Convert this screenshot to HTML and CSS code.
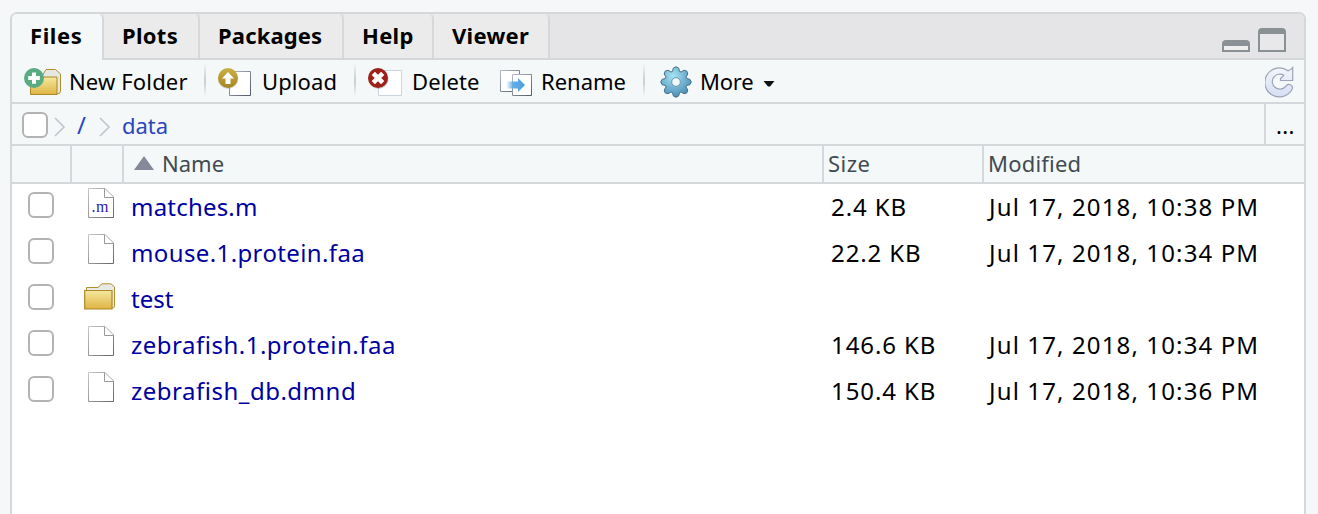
FILE: index.html
```html
<!DOCTYPE html>
<html lang="en">
<head>
<meta charset="utf-8">
<title>Files</title>
<link rel="stylesheet" href="styles.css">
</head>
<body>
<svg class="defs" width="0" height="0">
  <defs>
    <linearGradient id="gold" x1="0" y1="0" x2="0" y2="1"><stop offset="0" stop-color="#f4e9a0"/><stop offset="1" stop-color="#dfb442"/></linearGradient>
    <linearGradient id="edge" x1="0" y1="0" x2="1" y2="1"><stop offset="0" stop-color="#c8c8c8"/><stop offset="1" stop-color="#686868"/></linearGradient>
    <linearGradient id="slate" x1="0" y1="0" x2="1" y2="1"><stop offset="0" stop-color="#b8bdc4"/><stop offset="1" stop-color="#50596a"/></linearGradient>
    <linearGradient id="olive" x1="0" y1="0" x2="0" y2="1"><stop offset="0" stop-color="#cdb045"/><stop offset="1" stop-color="#a58520"/></linearGradient>
    <linearGradient id="arrow" x1="0" y1="0" x2="1" y2="0"><stop offset="0" stop-color="#62aeea" stop-opacity="0.1"/><stop offset="0.35" stop-color="#62aeea"/><stop offset="1" stop-color="#4d9ce2"/></linearGradient>
    <radialGradient id="steel" cx="0.4" cy="0.3" r="0.7"><stop offset="0" stop-color="#a5e3f2"/><stop offset="1" stop-color="#4b8fb9"/></radialGradient>
    <linearGradient id="ice" x1="0" y1="0" x2="0" y2="1"><stop offset="0" stop-color="#f3f6fb"/><stop offset="1" stop-color="#d5def5"/></linearGradient>
    <symbol id="page" viewBox="0 0 26 30">
      <path d="M.5.5H17L25.500 9V29.500H.5Z" fill="#fff" stroke="url(#edge)"/>
      <path d="M16.500 1V9.500H25.500" fill="#fff" stroke="#999"/>
    </symbol>
    <symbol id="folder" viewBox="0 0 32 27">
      <path d="M2.500 8V4.500H14L18 .8H27L30.500 4V23.500Q30.500 25 28 25" fill="#e9e9e7" stroke="#b0902c"/>
      <path d="M.7 7.500H28V26H.7Z" fill="url(#gold)" stroke="#ad8827" stroke-width="1.2"/>
    </symbol>
  </defs>
</svg>

<main class="panel">
  <header class="tabs">
    <div class="tab active t-files">Files</div>
    <div class="tab t-plots">Plots</div>
    <div class="tab t-packages">Packages</div>
    <div class="tab t-help">Help</div>
    <div class="tab t-viewer">Viewer</div>
    <div class="window-controls">
      <svg width="28" height="12" viewBox="0 0 28 12"><path d="M0 12V4Q0 0 4 0H24Q28 0 28 4V12Z" fill="#8a9194"/><path d="M2 6H26V10H2Z" fill="#eee"/></svg>
      <svg width="28" height="24" viewBox="0 0 28 24"><path d="M0 24V4Q0 0 4 0H24Q28 0 28 4V24Z" fill="#8a9194"/><path d="M2 6H26V22H2Z" fill="#e8e8ea"/></svg>
    </div>
  </header>

  <div class="toolbar">
    <div class="tool new-folder">
      <svg width="38" height="30" viewBox="0 0 38 30">
        <path d="M18 8L22 1.500H31.500L36.500 6V23Q36.500 26 33 26" fill="#e6e6e4" stroke="#b0902c"/>
        <path d="M6.500 9H33V26.500H6.500Z" fill="url(#gold)" stroke="#ad8827"/>
        <circle cx="10" cy="10" r="10" fill="#59ab82"/>
        <path d="M8 4.500H12V8H15.800V12H12V15.700H8V12H4.200V8H8Z" fill="#fff"/>
      </svg>
      <span>New Folder</span>
    </div>
    <i class="sep"></i>
    <div class="tool upload">
      <svg width="34" height="30" viewBox="0 0 34 30">
        <path d="M11.500 3.500H32.500V27.500H11.500Z" fill="#fff" stroke="url(#slate)"/>
        <circle cx="10" cy="11" r="10" fill="#777" opacity=".25"/>
        <circle cx="10" cy="10" r="10" fill="url(#olive)"/>
        <path d="M10 4L16 10.500H12.500V16H7.500V10.500H4Z" fill="#fff"/>
      </svg>
      <span>Upload</span>
    </div>
    <i class="sep"></i>
    <div class="tool delete">
      <svg width="34" height="30" viewBox="0 0 34 30">
        <path d="M10.500 2.500H33.500V27.500H10.500Z" fill="#fff" stroke="#ccd4df"/>
        <circle cx="10.500" cy="11" r="10" fill="#555" opacity=".3"/>
        <circle cx="10" cy="10" r="10" fill="#9b2119"/>
        <path d="M5.300 5.300L14.700 14.700M14.700 5.300L5.300 14.700" stroke="#fff" stroke-width="4.600"/>
      </svg>
      <span>Delete</span>
    </div>
    <div class="tool rename">
      <svg width="32" height="26" viewBox="0 0 32 26">
        <path d="M.5.500H19.500V21.500H.5Z" fill="#fff" stroke="url(#slate)"/>
        <path d="M12.500 4.500H31.500V25.500H12.500Z" fill="#fff" stroke="url(#slate)"/>
        <path d="M7 11.500H18V8L25 15L18 22V18.500H7Z" fill="url(#arrow)"/>
      </svg>
      <span>Rename</span>
    </div>
    <i class="sep"></i>
    <div class="tool more">
      <svg width="32" height="32" viewBox="-16 -16 32 32">
        <g fill="url(#steel)" stroke="#45708a" stroke-width="1">
          <path d="M-3.600 -10.500L-2.600 -14Q0 -16.500 2.600 -14L3.600 -10.500L5 -10L8 -11.800Q11.800 -11.800 11.800 -8L10 -5L10.500 -3.600L14 -2.600Q16.500 0 14 2.600L10.500 3.600L10 5L11.800 8Q11.800 11.800 8 11.800L5 10L3.600 10.500L2.600 14Q0 16.500 -2.600 14L-3.600 10.500L-5 10L-8 11.800Q-11.800 11.800 -11.800 8L-10 5L-10.500 3.600L-14 2.600Q-16.500 0 -14 -2.600L-10.500 -3.600L-10 -5L-11.800 -8Q-11.800 -11.800 -8 -11.800L-5 -10Z"/>
          <circle r="4.300" fill="#f3f7f9" stroke="#6c9aae"/>
        </g>
      </svg>
      <span>More</span>
      <svg class="caret" width="12" height="6" viewBox="0 0 12 6"><path d="M.5 0H11.500L7 5.500H5Z" fill="#111"/></svg>
    </div>
    <svg class="refresh" width="30" height="32" viewBox="0 0 30 32">
      <path d="M23 4.800Q25.500 4.500 27.700 1.500V14.500H15.500V12.500L18.800 9.300A7.500 7.500 0 1 0 20.500 20.500Q22.500 17.500 25.500 18.800Q28.500 20.500 27 23.500A14.500 14.500 0 1 1 23 4.800Z" fill="url(#ice)" stroke="#9ea3b5" stroke-width="1.200"/>
    </svg>
  </div>

  <nav class="path">
    <div class="crumbs">
      <span class="check"></span>
      <svg class="chev" width="12" height="20" viewBox="0 0 12 20"><path d="M1 1L10 10L1 19" fill="none" stroke="#c2c6ce" stroke-width="1.700"/></svg>
      <span class="root">/</span>
      <svg class="chev" width="12" height="20" viewBox="0 0 12 20"><path d="M1 1L10 10L1 19" fill="none" stroke="#c2c6ce" stroke-width="1.700"/></svg>
      <span class="dir">data</span>
    </div>
    <div class="browse">...</div>
  </nav>

  <div class="row head">
    <div></div>
    <div></div>
    <div class="name"><svg width="20" height="14" viewBox="0 0 20 14"><path d="M0 14L10 0L20 14Z" fill="#848899"/></svg><span class="h-name">Name</span></div>
    <div class="size"><span class="h-size">Size</span></div>
    <div class="date"><span class="h-mod">Modified</span></div>
  </div>

  <div class="row">
    <div class="pick"><span class="check"></span></div>
    <div class="icon"><svg width="26" height="30"><use href="#page"/><text x="3.500" y="23.500" class="ext" textLength="17">.m</text></svg></div>
    <div class="name"><span class="f1">matches.m</span></div>
    <div class="size"><span>2.4 KB</span></div>
    <div class="date"><span>Jul 17, 2018, 10:38 PM</span></div>
  </div>
  <div class="row">
    <div class="pick"><span class="check"></span></div>
    <div class="icon"><svg width="26" height="30"><use href="#page"/></svg></div>
    <div class="name"><span class="f2">mouse.1.protein.faa</span></div>
    <div class="size"><span>22.2 KB</span></div>
    <div class="date"><span>Jul 17, 2018, 10:34 PM</span></div>
  </div>
  <div class="row">
    <div class="pick"><span class="check"></span></div>
    <div class="icon dir-icon"><svg width="32" height="27"><use href="#folder"/></svg></div>
    <div class="name"><span class="f3">test</span></div>
    <div class="size"></div>
    <div class="date"></div>
  </div>
  <div class="row">
    <div class="pick"><span class="check"></span></div>
    <div class="icon"><svg width="26" height="30"><use href="#page"/></svg></div>
    <div class="name"><span class="f4">zebrafish.1.protein.faa</span></div>
    <div class="size"><span>146.6 KB</span></div>
    <div class="date"><span>Jul 17, 2018, 10:34 PM</span></div>
  </div>
  <div class="row">
    <div class="pick"><span class="check"></span></div>
    <div class="icon"><svg width="26" height="30"><use href="#page"/></svg></div>
    <div class="name"><span class="f5">zebrafish_db.dmnd</span></div>
    <div class="size"><span>150.4 KB</span></div>
    <div class="date"><span>Jul 17, 2018, 10:36 PM</span></div>
  </div>
</main>
</body>
</html>
```
FILE: styles.css
```css
* { box-sizing: border-box; }
html, body { height: 100%; }
body {
  margin: 0;
  padding: 12px 12px 0 10px;
  overflow: hidden;
  background: #f5f7f9;
  color: #000;
  font: 22px/30px "Noto Sans", sans-serif;
  white-space: nowrap;
}
svg { display: block; flex: none; }
.defs { position: absolute; }
.panel {
  height: 100%;
  border: 2px solid #d5d8da;
  border-bottom: 0;
  border-radius: 7px 7px 0 0;
  background: #fff;
  overflow: hidden;
}

.tabs {
  display: flex;
  height: 46px;
  background: linear-gradient(#d5d8da, #d5d8da) 0 100% / 100% 2px no-repeat #e5e5e7;
}
.tab {
  height: 46px;
  padding: 6px 0 0 18px;
  font-weight: 700;
  letter-spacing: .3px;
  background: #ebebeb;
  border-right: 2px solid #d5d8da;
  border-bottom: 2px solid #d5d8da;
  border-top-right-radius: 5px;
}
.tab.active { background: #f4f8f9; border-bottom: 0; }
.t-files { width: 92px; letter-spacing: .6px; }
.t-plots { width: 96px; }
.t-packages { width: 144px; letter-spacing: .15px; }
.t-help { width: 90px; }
.t-viewer { width: 116px; }
.window-controls { display: flex; gap: 8px; align-items: flex-end; margin-left: auto; padding: 0 18px 8px 0; }

.toolbar {
  display: flex;
  align-items: flex-start;
  height: 44px;
  background: #f4f8f9;
  border-bottom: 2px solid #d5d8da;
}
.tool { display: flex; height: 42px; padding-top: 8px; }
.tool span { line-height: 30px; margin-top: -2px; }
.new-folder { width: 192px; padding-left: 12px; }
.new-folder span { margin-left: 7px; letter-spacing: .15px; }
.upload { width: 148px; padding-left: 12px; }
.upload span { margin-left: 10px; letter-spacing: .1px; }
.delete { width: 131px; padding-left: 12px; }
.delete span { margin-left: 10px; letter-spacing: .1px; }
.rename { width: 156px; padding-left: 13px; }
.rename svg { margin-top: 2px; }
.rename span { margin-left: 9px; }
.more { padding-left: 15px; }
.more svg { margin-top: -2px; }
.more span { width: 62px; margin-left: 8px; letter-spacing: -.2px; }
.more .caret { margin: 13px 0 0 1px; }
.sep { width: 2px; height: 34px; margin-top: 3px; background: linear-gradient(#f4f8f9, #ced2d6 45%, #ced2d6 60%, #f4f8f9); }
.refresh { margin: 6px 9px 0 auto; }

.path { display: flex; height: 42px; background: #f4f8f9; border-bottom: 2px solid #d5d8da; color: #2b44c0; }
.crumbs { display: flex; align-items: flex-start; flex: 1; padding: 8px 0 0 10px; }
.crumbs .chev { margin: 5px 0 0 6px; }
.crumbs .root { width: 16px; margin: -2px 0 0 11px; font-size: 24px; }
.crumbs .dir { margin: -2px 0 0 11px; }
.browse { width: 40px; padding: 6px 0 0 10px; border-left: 2px solid #d5d8da; color: #000; letter-spacing: .4px; }

.check { display: block; flex: none; width: 26px; height: 26px; border: 2px solid #b3b3b3; border-radius: 6px; background: #fff; }

.row { display: grid; grid-template-columns: 60px 52px 700px 160px 1fr; height: 46px; font-size: 24px; }
.head { height: 38px; background: #f4f8f9; border-bottom: 2px solid #d5d8da; color: #414b50; font-size: 22px; }
.head > div { border-right: 2px solid #d5d8da; padding-top: 2px; }
.head > div:last-child { border-right: 0; }
.head .name { display: flex; padding-left: 10px; }
.head .name svg { margin: 8px 8px 0 0; }
.head .size { padding-left: 4px; letter-spacing: .5px; }
.head .date { padding-left: 4px; letter-spacing: .2px; }
.pick { padding: 8px 0 0 16px; }
.icon { padding: 4px 0 0 16px; }
.dir-icon { padding: 7px 0 0 12px; }
.row:not(.head) .name { padding: 8px 0 0 7px; color: #0000a2; }
.row:not(.head) .size { padding: 8px 0 0 7px; letter-spacing: .9px; }
.row:not(.head) .date { padding: 8px 0 0 5px; letter-spacing: 1.13px; }
.f1 { letter-spacing: .2px; }
.f2 { letter-spacing: .38px; }
.f4, .f5 { letter-spacing: .5px; }
.ext { font: 16px "Liberation Serif", serif; fill: #2a1bb0; }
```
